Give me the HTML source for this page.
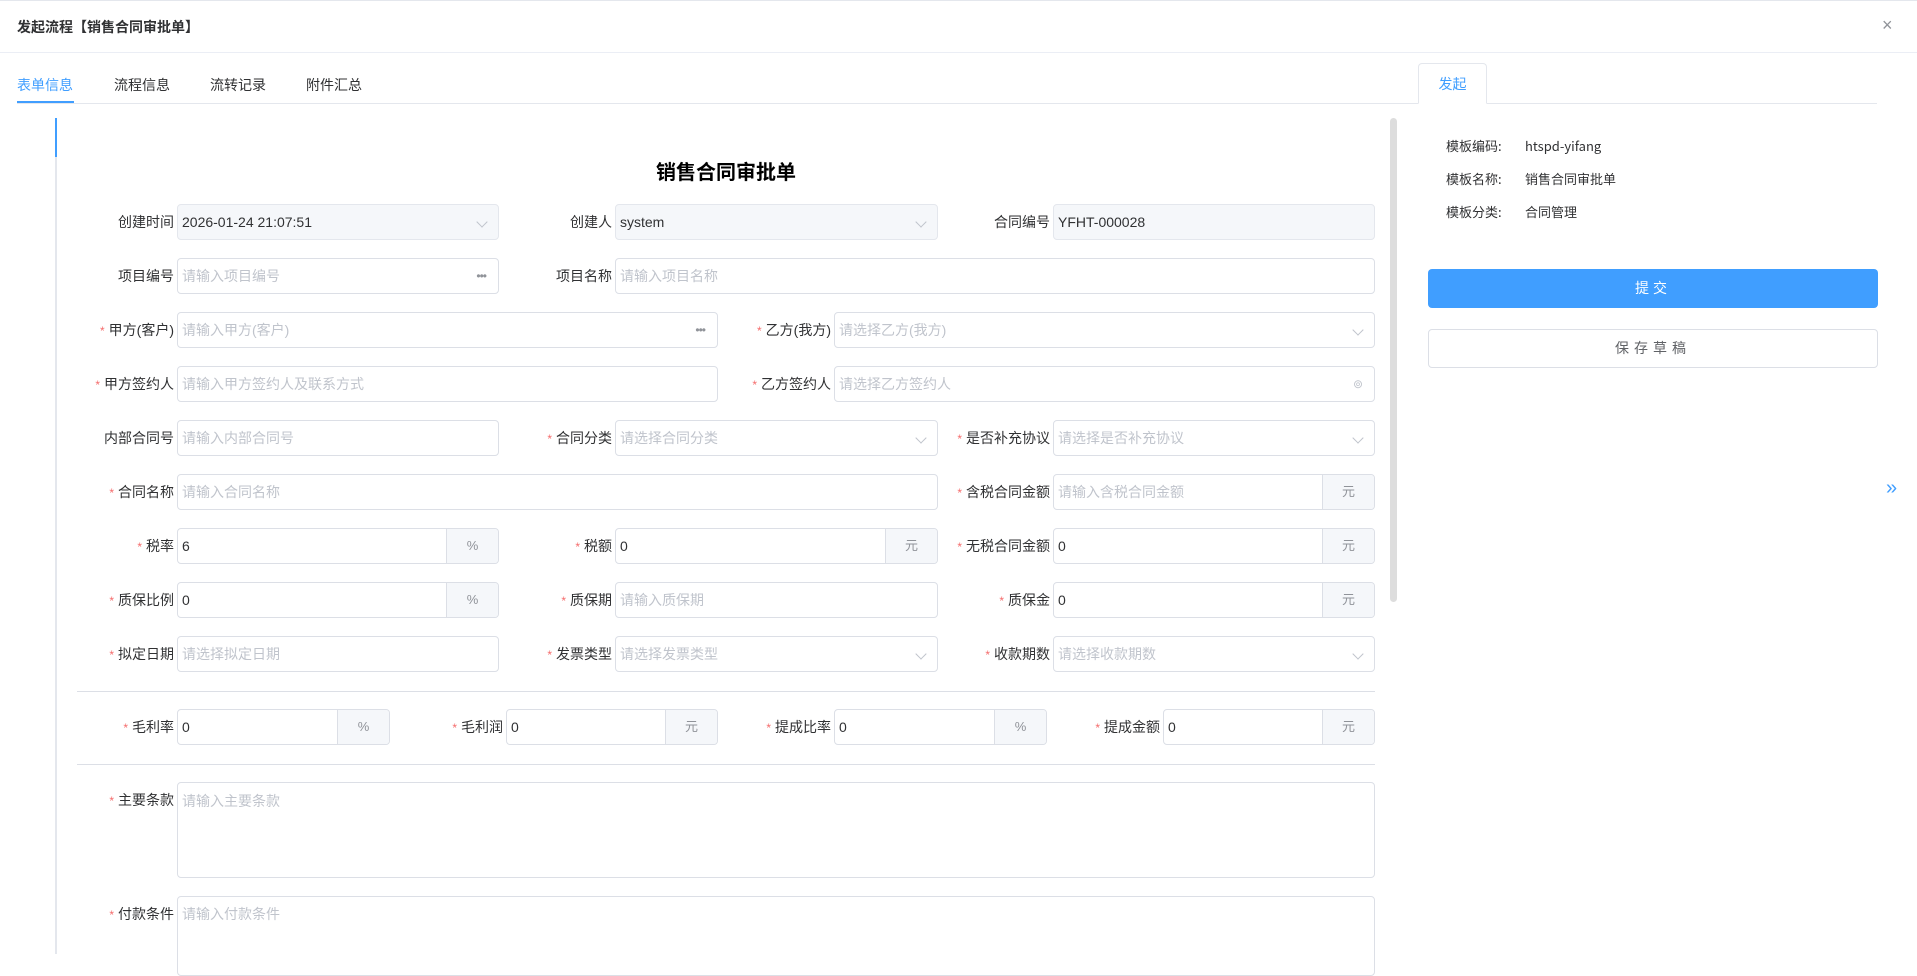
<!DOCTYPE html>
<html><head><meta charset="utf-8"><style>
*{box-sizing:border-box;margin:0;padding:0}
body{width:1917px;height:954px;overflow:hidden;background:#fff;font-family:"Liberation Sans","Noto Sans CJK SC",sans-serif;color:#303133;position:relative;font-size:14px}
.a{position:absolute}
.lb{position:absolute;font-size:14px;color:#303133;height:36px;line-height:36px;white-space:nowrap}
.lb i{color:#f56c6c;font-style:normal;margin-right:4px;font-size:12px}
.in{position:absolute;height:36px;border:1px solid #dcdfe6;border-radius:4px;background:#fff;line-height:34px;padding-left:4px;font-size:14px;color:#303133;white-space:nowrap;overflow:hidden}
.ph{color:#c0c4cc}
.dis{background:#f5f7fa;border-color:#e4e7ed}
.sf{position:absolute;right:0;top:0;bottom:0;width:52px;background:#f5f7fa;border-left:1px solid #dcdfe6;text-align:center;color:#909399;font-size:13px}
.ar{position:absolute;right:12px;top:13px;width:8px;height:8px;border-right:1px solid #c0c4cc;border-bottom:1px solid #c0c4cc;transform:rotate(45deg)}
.dots{position:absolute;right:12px;top:0;color:#909399;font-size:12px;letter-spacing:-1px}
.rp{position:absolute;font-size:13px;line-height:20px;height:20px;font-family:"Noto Sans CJK SC","Liberation Sans",sans-serif}
</style></head><body>
<div class="a" style="left:0;top:0;width:1917px;height:1px;background:#e4e7ed"></div>
<div class="a" style="left:17px;top:17px;font-size:14px;font-weight:bold;color:#303133">发起流程【销售合同审批单】</div>
<div class="a" style="left:1882px;top:15px;font-size:18px;color:#909399">×</div>
<div class="a" style="left:0;top:52px;width:1917px;height:1px;background:#ebeef5"></div>

<div class="a" style="left:17px;top:75px;color:#409eff">表单信息</div>
<div class="a" style="left:114px;top:75px;color:#303133">流程信息</div>
<div class="a" style="left:210px;top:75px;color:#303133">流转记录</div>
<div class="a" style="left:306px;top:75px;color:#303133">附件汇总</div>
<div class="a" style="left:17px;top:101px;width:57px;height:2px;background:#409eff"></div>
<div class="a" style="left:17px;top:103px;width:1401px;height:1px;background:#e4e7ed"></div>

<div class="a" style="left:1418px;top:63px;width:69px;height:41px;border:1px solid #e4e7ed;border-bottom:1px solid #fff;border-radius:4px 4px 0 0;background:#fff;text-align:center;line-height:40px;color:#409eff">发起</div>
<div class="a" style="left:1487px;top:103px;width:390px;height:1px;background:#e4e7ed"></div>

<div class="a" style="left:55px;top:118px;width:2px;height:836px;background:#e4e7ed"></div>
<div class="a" style="left:55px;top:118px;width:2px;height:39px;background:#409eff"></div>
<div class="a" style="left:1390px;top:118px;width:7px;height:484px;background:#ddd;border-radius:4px"></div>

<div class="a" style="left:0;width:1452px;top:156px;text-align:center;font-size:20px;font-weight:bold;color:#000">销售合同审批单</div>

<div class="lb" style="right:1743px;top:204px">创建时间</div>
<div class="in dis" style="left:177px;top:204px;width:322px">2026-01-24 21:07:51<span class="ar"></span></div>
<div class="lb" style="right:1305px;top:204px">创建人</div>
<div class="in dis" style="left:615px;top:204px;width:323px">system<span class="ar"></span></div>
<div class="lb" style="right:867px;top:204px">合同编号</div>
<div class="in dis" style="left:1053px;top:204px;width:322px">YFHT-000028</div>

<div class="lb" style="right:1743px;top:258px">项目编号</div>
<div class="in" style="left:177px;top:258px;width:322px"><span class="ph">请输入项目编号</span><span class="dots">•••</span></div>
<div class="lb" style="right:1305px;top:258px">项目名称</div>
<div class="in" style="left:615px;top:258px;width:760px"><span class="ph">请输入项目名称</span></div>

<div class="lb" style="right:1743px;top:312px"><i>*</i>甲方(客户)</div>
<div class="in" style="left:177px;top:312px;width:541px"><span class="ph">请输入甲方(客户)</span><span class="dots">•••</span></div>
<div class="lb" style="right:1086px;top:312px"><i>*</i>乙方(我方)</div>
<div class="in" style="left:834px;top:312px;width:541px"><span class="ph">请选择乙方(我方)</span><span class="ar"></span></div>

<div class="lb" style="right:1743px;top:366px"><i>*</i>甲方签约人</div>
<div class="in" style="left:177px;top:366px;width:541px"><span class="ph">请输入甲方签约人及联系方式</span></div>
<div class="lb" style="right:1086px;top:366px"><i>*</i>乙方签约人</div>
<div class="in" style="left:834px;top:366px;width:541px"><span class="ph">请选择乙方签约人</span><span class="dots" style="color:#c0c4cc">⊚</span></div>

<div class="lb" style="right:1743px;top:420px">内部合同号</div>
<div class="in" style="left:177px;top:420px;width:322px"><span class="ph">请输入内部合同号</span></div>
<div class="lb" style="right:1305px;top:420px"><i>*</i>合同分类</div>
<div class="in" style="left:615px;top:420px;width:323px"><span class="ph">请选择合同分类</span><span class="ar"></span></div>
<div class="lb" style="right:867px;top:420px"><i>*</i>是否补充协议</div>
<div class="in" style="left:1053px;top:420px;width:322px"><span class="ph">请选择是否补充协议</span><span class="ar"></span></div>

<div class="lb" style="right:1743px;top:474px"><i>*</i>合同名称</div>
<div class="in" style="left:177px;top:474px;width:761px"><span class="ph">请输入合同名称</span></div>
<div class="lb" style="right:867px;top:474px"><i>*</i>含税合同金额</div>
<div class="in" style="left:1053px;top:474px;width:322px"><span class="ph">请输入含税合同金额</span><span class="sf">元</span></div>

<div class="lb" style="right:1743px;top:528px"><i>*</i>税率</div>
<div class="in" style="left:177px;top:528px;width:322px">6<span class="sf">%</span></div>
<div class="lb" style="right:1305px;top:528px"><i>*</i>税额</div>
<div class="in" style="left:615px;top:528px;width:323px">0<span class="sf">元</span></div>
<div class="lb" style="right:867px;top:528px"><i>*</i>无税合同金额</div>
<div class="in" style="left:1053px;top:528px;width:322px">0<span class="sf">元</span></div>

<div class="lb" style="right:1743px;top:582px"><i>*</i>质保比例</div>
<div class="in" style="left:177px;top:582px;width:322px">0<span class="sf">%</span></div>
<div class="lb" style="right:1305px;top:582px"><i>*</i>质保期</div>
<div class="in" style="left:615px;top:582px;width:323px"><span class="ph">请输入质保期</span></div>
<div class="lb" style="right:867px;top:582px"><i>*</i>质保金</div>
<div class="in" style="left:1053px;top:582px;width:322px">0<span class="sf">元</span></div>

<div class="lb" style="right:1743px;top:636px"><i>*</i>拟定日期</div>
<div class="in" style="left:177px;top:636px;width:322px"><span class="ph">请选择拟定日期</span></div>
<div class="lb" style="right:1305px;top:636px"><i>*</i>发票类型</div>
<div class="in" style="left:615px;top:636px;width:323px"><span class="ph">请选择发票类型</span><span class="ar"></span></div>
<div class="lb" style="right:867px;top:636px"><i>*</i>收款期数</div>
<div class="in" style="left:1053px;top:636px;width:322px"><span class="ph">请选择收款期数</span><span class="ar"></span></div>

<div class="a" style="left:77px;top:691px;width:1298px;height:1px;background:#dcdfe6"></div>

<div class="lb" style="right:1743px;top:709px"><i>*</i>毛利率</div>
<div class="in" style="left:177px;top:709px;width:213px">0<span class="sf">%</span></div>
<div class="lb" style="right:1414px;top:709px"><i>*</i>毛利润</div>
<div class="in" style="left:506px;top:709px;width:212px">0<span class="sf">元</span></div>
<div class="lb" style="right:1086px;top:709px"><i>*</i>提成比率</div>
<div class="in" style="left:834px;top:709px;width:213px">0<span class="sf">%</span></div>
<div class="lb" style="right:757px;top:709px"><i>*</i>提成金额</div>
<div class="in" style="left:1163px;top:709px;width:212px">0<span class="sf">元</span></div>
<div class="a" style="left:77px;top:764px;width:1298px;height:1px;background:#dcdfe6"></div>

<div class="lb" style="right:1743px;top:782px;line-height:36px"><i>*</i>主要条款</div>
<div class="in" style="left:177px;top:782px;width:1198px;height:96px;line-height:36px"><span class="ph">请输入主要条款</span></div>
<div class="lb" style="right:1743px;top:896px"><i>*</i>付款条件</div>
<div class="in" style="left:177px;top:896px;width:1198px;height:80px"><span class="ph">请输入付款条件</span></div>

<div class="rp" style="left:1446px;top:136px">模板编码:</div>
<div class="rp" style="left:1525px;top:136px">htspd-yifang</div>
<div class="rp" style="left:1446px;top:169px">模板名称:</div>
<div class="rp" style="left:1525px;top:169px">销售合同审批单</div>
<div class="rp" style="left:1446px;top:202px">模板分类:</div>
<div class="rp" style="left:1525px;top:202px">合同管理</div>
<div class="a" style="left:1428px;top:269px;width:450px;height:39px;background:#409eff;border-radius:4px;color:#fff;text-align:center;line-height:39px;letter-spacing:4px">提交</div>
<div class="a" style="left:1428px;top:329px;width:450px;height:39px;border:1px solid #dcdfe6;border-radius:4px;color:#606266;text-align:center;line-height:37px;letter-spacing:5px">保存草稿</div>
<div class="a" style="left:1886px;top:477px;color:#409eff;font-size:20px">»</div>
</body></html>
